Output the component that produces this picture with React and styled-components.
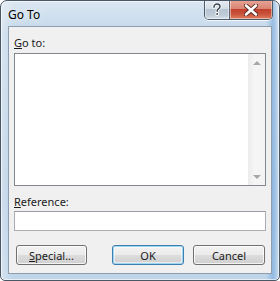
import React from "react";
import styled, { createGlobalStyle } from "styled-components";

const Global = createGlobalStyle`
  html, body { margin: 0; padding: 0; background: #ffffff; }
  body { font-family: "Noto Sans", "Segoe UI", Arial, sans-serif; font-size: 11px; color: #000; }
  * { box-sizing: border-box; }
`;

const Window = styled.div`
  width: 280px;
  height: 281px;
  display: flex;
  flex-direction: column;
  border: 1px solid #4a5866;
  border-radius: 7px 7px 5px 5px;
  background:
    linear-gradient(to right, rgba(255,255,255,0.35), rgba(255,255,255,0) 12px, rgba(255,255,255,0) 265px, rgba(90,150,215,0.45) 272px, rgba(255,255,255,0.2)),
    linear-gradient(to bottom, #dbe7f2 0px, #c6d9ea 30px, #b9d0e6 200px, #bfd5ea 281px);
  box-shadow: inset 0 0 0 1px rgba(255,255,255,0.6);
  overflow: hidden;
`;

const TitleBar = styled.div`
  height: 26px;
  display: flex;
  align-items: flex-start;
  justify-content: space-between;
  padding-left: 7px;
`;

const Title = styled.div`
  padding-top: 5px;
  font-size: 12px;
  color: #000;
  text-shadow: 0 0 6px rgba(255,255,255,0.9);
`;

const Caption = styled.div`
  display: flex;
  margin-top: -1px;
  margin-right: 6px;
  border: 1px solid #4d5a68;
  border-top: none;
  border-radius: 0 0 5px 5px;
  overflow: hidden;
  height: 20px;
  box-shadow: 0 1px 0 rgba(255,255,255,0.7);
`;

const CapButton = styled.div`
  width: ${p => p.$w}px;
  height: 100%;
  display: flex;
  align-items: center;
  justify-content: center;
  background: ${p => p.$close
    ? "linear-gradient(to bottom, #e8a597 0%, #d98573 45%, #c2402c 50%, #c9543c 75%, #e07f5f 100%)"
    : "linear-gradient(to bottom, #e9eef3 0%, #d3dce5 45%, #b7c4d1 50%, #bfcbd7 80%, #d6e1ea 100%)"};
  border-left: ${p => p.$close ? "1px solid #5b6470" : "none"};
  box-shadow: inset 0 0 0 1px rgba(255,255,255,0.45);
`;

const Client = styled.div`
  flex: 1;
  margin: 0 7px 6px 7px;
  border: 1px solid #8f9eae;
  background: #f0f0f0;
  display: flex;
  flex-direction: column;
  padding: 8px 5px 8px 5px;
`;

const Label = styled.div`
  height: 15px;
  line-height: 15px;
  font-size: 11px;
  color: #1a1a1a;
  margin-bottom: ${p => p.$gap}px;
  u { text-decoration: underline; text-underline-offset: 1px; }
`;

const ListBox = styled.div`
  height: 133px;
  border: 1px solid #828790;
  background: #ffffff;
  display: flex;
  justify-content: flex-end;
  margin-bottom: 8px;
`;

const ScrollBar = styled.div`
  width: 17px;
  background: linear-gradient(to right, #ececec, #f6f6f6 40%, #f3f3f3);
  display: flex;
  flex-direction: column;
  justify-content: space-between;
  align-items: center;
  padding: 7px 0 6px 0;
`;

const Arrow = styled.div`
  width: 0;
  height: 0;
  border-left: 4px solid transparent;
  border-right: 4px solid transparent;
  ${p => p.$down
    ? "border-top: 4px solid #a8a8a8;"
    : "border-bottom: 4px solid #a8a8a8;"}
`;

const TextBox = styled.div`
  height: 20px;
  border: 1px solid #abadb3;
  border-top-color: #9a9ca3;
  background: #ffffff;
  margin-bottom: 14px;
`;

const ButtonRow = styled.div`
  display: flex;
  padding-left: 2px;
  padding-right: 1px;
`;

const Button = styled.div`
  width: ${p => p.$w}px;
  height: 20px;
  margin-left: ${p => p.$ml}px;
  border: 1px solid ${p => p.$default ? "#3c7fb1" : "#707070"};
  border-radius: 3px;
  display: flex;
  align-items: center;
  justify-content: center;
  font-size: 11px;
  color: #1a1a1a;
  background: linear-gradient(to bottom, #f2f2f2 0%, #ebebeb 50%, #dddddd 50%, #cfcfcf 100%);
  box-shadow: ${p => p.$default
    ? "inset 0 0 0 1px #9fd6f2, inset 0 0 0 2px rgba(255,255,255,0.5)"
    : "inset 0 0 0 1px rgba(255,255,255,0.75)"};
  u { text-decoration: underline; text-underline-offset: 1px; }
`;

function HelpGlyph() {
  return (
    <svg width="12" height="13" viewBox="0 0 12 13">
      <path d="M3 4.2 C3 1.8 4.5 1 6 1 C7.8 1 9 2 9 3.6 C9 5.2 7.6 5.6 6.8 6.4 C6.3 6.9 6.2 7.4 6.2 8.2"
        fill="none" stroke="#ffffff" strokeWidth="3.2" strokeLinecap="round" />
      <path d="M3 4.2 C3 1.8 4.5 1 6 1 C7.8 1 9 2 9 3.6 C9 5.2 7.6 5.6 6.8 6.4 C6.3 6.9 6.2 7.4 6.2 8.2"
        fill="none" stroke="#3e4a58" strokeWidth="1.5" strokeLinecap="round" />
      <circle cx="6.2" cy="11" r="1.9" fill="#ffffff" />
      <circle cx="6.2" cy="11" r="1" fill="#3e4a58" />
    </svg>
  );
}

function CloseGlyph() {
  return (
    <svg width="14" height="12" viewBox="0 0 14 12">
      <path d="M2 1.5 L12 10.5 M12 1.5 L2 10.5" stroke="#5a2a22" strokeWidth="4.4" strokeLinecap="round" />
      <path d="M2 1.5 L12 10.5 M12 1.5 L2 10.5" stroke="#ffffff" strokeWidth="2.6" strokeLinecap="round" />
    </svg>
  );
}

export default function App() {
  return (
    <>
      <Global />
      <Window>
        <TitleBar>
          <Title>Go To</Title>
          <Caption>
            <CapButton $w={24}><HelpGlyph /></CapButton>
            <CapButton $w={43} $close><CloseGlyph /></CapButton>
          </Caption>
        </TitleBar>
        <Client>
          <Label $gap={3}><u>G</u>o to:</Label>
          <ListBox>
            <ScrollBar>
              <Arrow />
              <Arrow $down />
            </ScrollBar>
          </ListBox>
          <Label $gap={2}><u>R</u>eference:</Label>
          <TextBox />
          <ButtonRow>
            <Button $w={71} $ml={0}><span><u>S</u>pecial...</span></Button>
            <Button $w={72} $ml={25} $default>OK</Button>
            <Button $w={72} $ml={9}>Cancel</Button>
          </ButtonRow>
        </Client>
      </Window>
    </>
  );
}
